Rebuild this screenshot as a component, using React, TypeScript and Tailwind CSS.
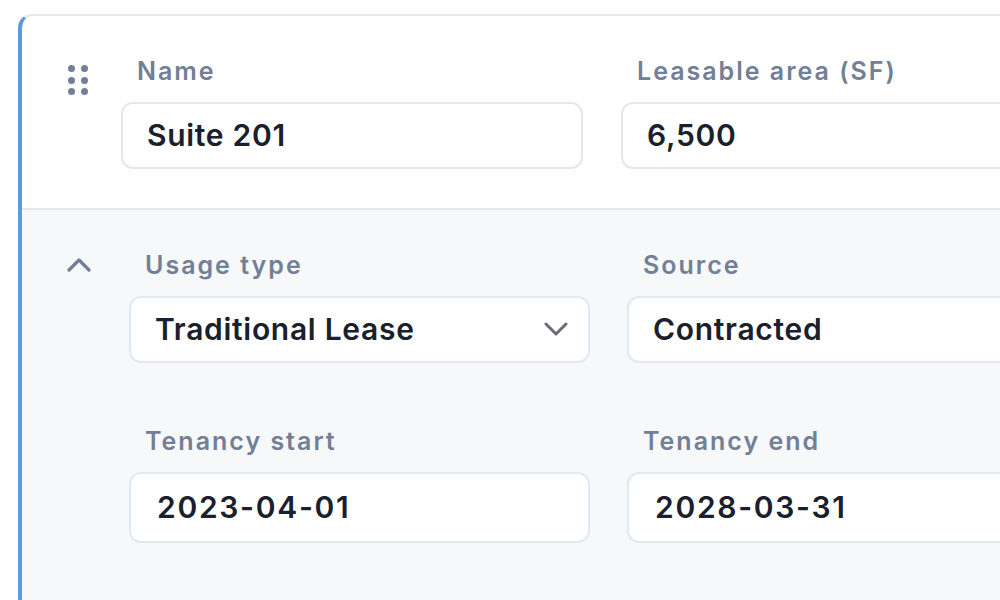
import React from 'react';

const Label = ({ children }: { children: React.ReactNode }) => (
    <div className="h-8 pl-4 text-[25px] leading-8 font-semibold tracking-[2px] text-[#718096]">{children}</div>
);

const Field = ({ label, value, select, tall }: { label: string; value: string; select?: boolean; tall?: boolean }) => (
    <div className="flex flex-col gap-[15px]">
        <Label>{label}</Label>
        <div
            className={`flex items-center justify-between rounded-[12px] border-2 border-[#e2e8f0] bg-white pl-[24px] pr-[20px] text-[30px] font-semibold text-[#1a202c] ${tall ? 'h-[71px]' : 'h-[67px]'}`}
        >
            <span className={tall ? 'pl-[2px] tracking-[1.7px]' : 'tracking-[0.7px]'}>{value}</span>
            {select && (
                <svg width="24" height="14" viewBox="0 0 24 14" fill="none" className="mt-[-2px]">
                    <polyline points="2,2 12,12 22,2" stroke="#6b6b75" strokeWidth="3" strokeLinecap="round" strokeLinejoin="round" />
                </svg>
            )}
        </div>
    </div>
);

const DragHandle = () => (
    <div className="grid grid-cols-2 gap-x-[6px] gap-y-[4.5px] w-fit">
        {[0, 1, 2, 3, 4, 5].map((i) => (
            <span key={i} className="block w-[7px] h-[7px] rounded-full bg-[#718096]" />
        ))}
    </div>
);

export default function App() {
    return (
        <div
            className="w-[1000px] h-[600px] overflow-hidden bg-white pl-[18px] pt-[14px]"
            style={{ fontFamily: 'Inter, "Noto Sans", sans-serif' }}
        >
            <div className="w-[1100px] h-[700px] rounded-tl-[14px] border-t-2 border-l-4 border-t-[#e2e8f0] border-l-[#5b9be0] bg-white">
                <div className="flex pt-[39px] pb-[39px] border-b-2 border-[#e5e9f0]">
                    <div className="w-[99px] shrink-0 pl-[46px] pt-[10px]">
                        <DragHandle />
                    </div>
                    <div className="grid grid-cols-[462px_462px] gap-x-[38px]">
                        <Field label="Name" value="Suite 201" />
                        <Field label="Leasable area (SF)" value="6,500" />
                    </div>
                </div>
                <div className="flex bg-[#f7f8fa] pt-[39px] h-full">
                    <div className="w-[107px] shrink-0 pl-[45px] pt-[9px]">
                        <svg width="24" height="14" viewBox="0 0 24 14" fill="none">
                            <polyline points="2,12 12,2 22,12" stroke="#718096" strokeWidth="3.2" strokeLinecap="round" strokeLinejoin="round" />
                        </svg>
                    </div>
                    <div className="grid grid-cols-[461px_461px] gap-x-[37px] gap-y-[62px] content-start">
                        <Field label="Usage type" value="Traditional Lease" select />
                        <Field label="Source" value="Contracted" />
                        <Field label="Tenancy start" value="2023-04-01" tall />
                        <Field label="Tenancy end" value="2028-03-31" tall />
                    </div>
                </div>
            </div>
        </div>
    );
}
